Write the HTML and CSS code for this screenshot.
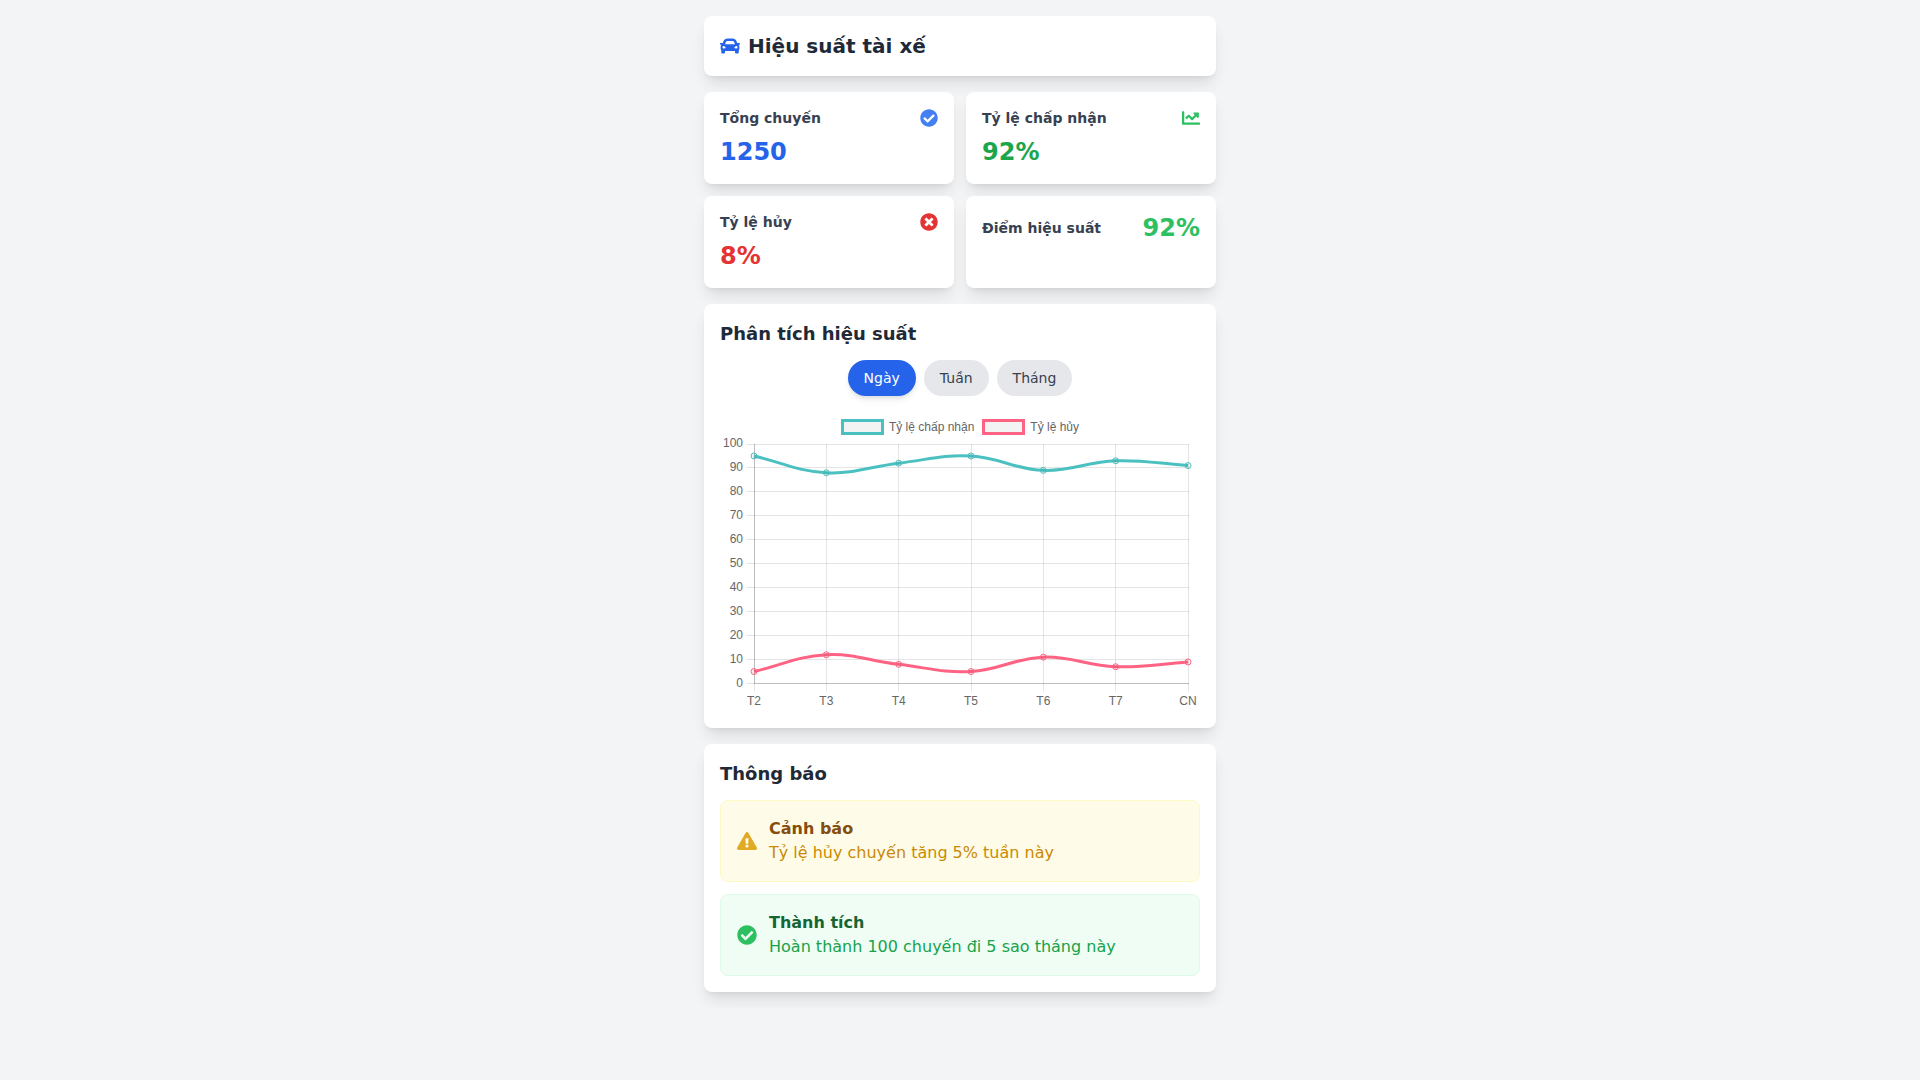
FILE: index.html
```html
<!DOCTYPE html>
<html lang="vi">
  <head>
    <meta charset="UTF-8">
    <meta name="viewport" content="width=device-width, initial-scale=1.0">
    <title>Hiệu suất tài xế</title>
    <link rel="stylesheet" href="styles.css">
  </head>
  <body>
    <div class="container">
      <header class="card header">
        <svg class="icon icon-car" viewBox="0 0 512 512" aria-hidden="true"><path d="M499.990 176h-59.870l-16.640-41.600C406.380 91.630 365.570 64 319.500 64h-127c-46.060 0-86.880 27.630-103.990 70.400L71.870 176H12.010C4.200 176-1.530 183.340.37 190.910l6 24C7.700 220.250 12.500 224 18.010 224h20.070C24.650 235.730 16 252.780 16 272v48c0 16.120 6.160 30.670 16 41.930V416c0 17.670 14.330 32 32 32h32c17.670 0 32-14.330 32-32v-32h256v32c0 17.670 14.330 32 32 32h32c17.670 0 32-14.330 32-32v-54.070c9.840-11.250 16-25.800 16-41.930v-48c0-19.220-8.650-36.270-22.070-48H494c5.510 0 10.310-3.750 11.640-9.090l6-24c1.890-7.570-3.840-14.910-11.650-14.910zm-352.060-17.830c7.290-18.220 24.940-30.170 44.570-30.170h127c19.630 0 37.280 11.950 44.570 30.170L384 208H128l19.930-49.830zM96 319.800c-19.200 0-32-12.760-32-31.900S76.800 256 96 256s48 28.710 48 47.850-28.800 15.950-48 15.950zm320 0c-19.200 0-48 3.190-48-15.950S396.800 256 416 256s32 12.760 32 31.900-12.800 31.900-32 31.900z"/></svg>
        <h1>Hiệu suất tài xế</h1>
      </header>

      <section class="stats">
        <div class="card">
          <div class="stat-head">
            <h2>Tổng chuyến</h2>
            <svg class="icon icon-blue" viewBox="0 0 512 512" aria-hidden="true"><path d="M504 256c0 136.967-111.033 248-248 248S8 392.967 8 256 119.033 8 256 8s248 111.033 248 248zM227.314 387.314l184-184c6.248-6.248 6.248-16.379 0-22.627l-22.627-22.627c-6.248-6.249-16.379-6.249-22.628 0L216 308.118l-70.059-70.059c-6.248-6.248-16.379-6.248-22.628 0l-22.627 22.627c-6.248 6.248-6.248 16.379 0 22.627l104 104c6.249 6.249 16.379 6.249 22.628.001z"/></svg>
          </div>
          <p class="value value-blue">1250</p>
        </div>
        <div class="card">
          <div class="stat-head">
            <h2>Tỷ lệ chấp nhận</h2>
            <svg class="icon icon-green" viewBox="0 0 512 512" aria-hidden="true"><path d="M496 384H64V80c0-8.840-7.160-16-16-16H16C7.160 64 0 71.160 0 80v336c0 17.670 14.330 32 32 32h464c8.840 0 16-7.160 16-16v-32c0-8.840-7.160-16-16-16zM464 96H345.940c-21.380 0-32.090 25.850-16.970 40.970l32.400 32.400L288 242.750l-73.370-73.370c-12.500-12.500-32.760-12.500-45.250 0l-68.690 68.690c-6.250 6.250-6.250 16.380 0 22.630l22.620 22.620c6.250 6.250 16.380 6.250 22.630 0L192 237.250l73.370 73.370c12.500 12.500 32.760 12.500 45.250 0l96-96 32.400 32.400c15.120 15.120 40.970 4.410 40.970-16.970V112c.010-8.840-7.150-16-15.990-16z"/></svg>
          </div>
          <p class="value value-green">92%</p>
        </div>
        <div class="card">
          <div class="stat-head">
            <h2>Tỷ lệ hủy</h2>
            <svg class="icon icon-red" viewBox="0 0 512 512" aria-hidden="true"><path d="M256 8C119 8 8 119 8 256s111 248 248 248 248-111 248-248S393 8 256 8zm121.600 313.100c4.700 4.700 4.700 12.300 0 17L338 377.600c-4.700 4.700-12.300 4.700-17 0L256 312l-65.100 65.600c-4.700 4.700-12.300 4.700-17 0L134.400 338c-4.700-4.700-4.700-12.300 0-17l65.600-65-65.600-65.100c-4.700-4.700-4.700-12.300 0-17l39.600-39.600c4.700-4.700 12.300-4.700 17 0l65 65.700 65.100-65.600c4.700-4.700 12.300-4.700 17 0l39.600 39.600c4.700 4.700 4.700 12.300 0 17L312 256l65.600 65.100z"/></svg>
          </div>
          <p class="value value-red">8%</p>
        </div>
        <div class="card">
          <div class="stat-head">
            <h2>Điểm hiệu suất</h2>
            <span class="value value-score">92%</span>
          </div>
        </div>
      </section>

      <section class="card">
        <h2 class="title">Phân tích hiệu suất</h2>
        <div class="tabs">
          <button type="button" class="tab active">Ngày</button>
          <button type="button" class="tab">Tuần</button>
          <button type="button" class="tab">Tháng</button>
        </div>
        <ul class="legend">
          <li class="legend-item"><span class="legend-box legend-accept"></span>Tỷ lệ chấp nhận</li>
          <li class="legend-item"><span class="legend-box legend-cancel"></span>Tỷ lệ hủy</li>
        </ul>
        <svg class="chart" id="chart" viewBox="0 0 480 276" role="img" aria-label="Phân tích hiệu suất"></svg>
      </section>

      <section class="card">
        <h2 class="title">Thông báo</h2>
        <div class="alerts">
          <div class="alert alert-warning">
            <svg class="icon icon-alert" viewBox="0 0 576 512" aria-hidden="true"><path d="M569.517 440.013C587.975 472.007 564.806 512 527.940 512H48.054c-36.937 0-59.999-40.055-41.577-71.987L246.423 23.985c18.467-32.009 64.720-31.951 83.154 0l239.940 416.028zM288 354c-25.405 0-46 20.595-46 46s20.595 46 46 46 46-20.595 46-46-20.595-46-46-46zm-43.673-165.346l7.418 136c.347 6.364 5.609 11.346 11.982 11.346h48.546c6.373 0 11.635-4.982 11.982-11.346l7.418-136c.375-6.874-5.098-12.654-11.982-12.654h-63.383c-6.884 0-12.356 5.780-11.981 12.654z"/></svg>
            <div>
              <h3>Cảnh báo</h3>
              <p>Tỷ lệ hủy chuyến tăng 5% tuần này</p>
            </div>
          </div>
          <div class="alert alert-success">
            <svg class="icon icon-alert" viewBox="0 0 512 512" aria-hidden="true"><path d="M504 256c0 136.967-111.033 248-248 248S8 392.967 8 256 119.033 8 256 8s248 111.033 248 248zM227.314 387.314l184-184c6.248-6.248 6.248-16.379 0-22.627l-22.627-22.627c-6.248-6.249-16.379-6.249-22.628 0L216 308.118l-70.059-70.059c-6.248-6.248-16.379-6.248-22.628 0l-22.627 22.627c-6.248 6.248-6.248 16.379 0 22.627l104 104c6.249 6.249 16.379 6.249 22.628.001z"/></svg>
            <div>
              <h3>Thành tích</h3>
              <p>Hoàn thành 100 chuyến đi 5 sao tháng này</p>
            </div>
          </div>
        </div>
      </section>
    </div>
    <script src="chart.js"></script>
  </body>
</html>
```

FILE: styles.css
```css
* {
  box-sizing: border-box;
  margin: 0;
  padding: 0;
}

body {
  background: #f3f4f6;
  color: #1f2937;
  font-family: "DejaVu Sans", sans-serif;
  font-size: 16px;
  line-height: 24px;
}

.container {
  display: flex;
  flex-direction: column;
  gap: 16px;
  max-width: 544px;
  margin: 0 auto;
  padding: 16px;
}

.card {
  background: #fff;
  border-radius: 8px;
  padding: 16px;
  box-shadow: 0 10px 15px -3px rgba(0, 0, 0, 0.1), 0 4px 6px -4px rgba(0, 0, 0, 0.1);
}

.header {
  display: flex;
  align-items: center;
  gap: 8px;
}

h1 {
  font-size: 20px;
  line-height: 28px;
}

.icon {
  flex-shrink: 0;
  width: 18px;
  height: 18px;
  fill: currentColor;
}

.icon-car {
  width: 20px;
  height: 20px;
  color: #2563eb;
}

.icon-blue {
  color: #4480f2;
}

.icon-green {
  color: #2dc060;
}

.icon-red {
  color: #e53333;
}

/* stats */
.stats {
  display: grid;
  grid-template-columns: 1fr 1fr;
  gap: 12px;
}

.stat-head {
  display: flex;
  align-items: center;
  justify-content: space-between;
}

.stat-head h2 {
  color: #374151;
  font-size: 14px;
  line-height: 20px;
}

.value {
  font-size: 24px;
  font-weight: bold;
  line-height: 32px;
}

p.value {
  margin-top: 8px;
}

.value-blue {
  color: #2563eb;
}

.value-green {
  color: #1ca64c;
}

.value-red {
  color: #e53333;
}

.value-score {
  color: #2dc060;
}

.title {
  font-size: 18px;
  line-height: 28px;
  margin-bottom: 12px;
}

/* chart */
.tabs {
  display: flex;
  justify-content: center;
  gap: 8px;
  margin-bottom: 16px;
}

.tab {
  background: #e5e7eb;
  border: 0;
  border-radius: 18px;
  color: #374151;
  cursor: pointer;
  font-family: inherit;
  font-size: 14px;
  line-height: 20px;
  padding: 8px 16px;
}

.tab.active {
  background: #2563eb;
  color: #fff;
  box-shadow: 0 4px 6px -1px rgba(0, 0, 0, 0.1), 0 2px 4px -2px rgba(0, 0, 0, 0.1);
}

.legend {
  display: flex;
  justify-content: center;
  gap: 8px;
  list-style: none;
  padding: 7px 0 1px;
  color: #666;
  font-family: "Liberation Sans", Arial, sans-serif;
  font-size: 12px;
  font-kerning: none;
  line-height: 16px;
}

.legend-item {
  display: flex;
  align-items: center;
  gap: 5px;
}

.legend-box {
  width: 43px;
  height: 16px;
  background: #f2f4f3;
  border: 3px solid;
}

.legend-accept {
  border-color: rgb(75, 192, 192);
}

.legend-cancel {
  border-color: rgb(255, 99, 132);
}

.chart {
  display: block;
  width: 100%;
  font-family: "Liberation Sans", Arial, sans-serif;
  font-size: 12px;
}

.chart text {
  fill: #666;
}

.grid-line {
  stroke: rgba(0, 0, 0, 0.1);
}

.axis-line {
  stroke: rgba(0, 0, 0, 0.25);
}

.series {
  fill: none;
  stroke-width: 3;
}

.point {
  fill: rgba(0, 0, 0, 0.05);
}

/* alerts */
.alerts {
  display: flex;
  flex-direction: column;
  gap: 12px;
}

.alert {
  display: flex;
  align-items: center;
  gap: 12px;
  border: 1px solid;
  border-radius: 8px;
  padding: 16px;
}

.icon-alert {
  width: 20px;
  height: 20px;
}

.alert-warning {
  background: #fefce8;
  border-color: #fef9c3;
  color: #ca8a04;
}

.alert-warning .icon {
  color: #e0aa24;
}

.alert-warning h3 {
  color: #854d0e;
}

.alert-success {
  background: #f0fdf4;
  border-color: #dcfce7;
  color: #16a34a;
}

.alert-success .icon {
  color: #2dc060;
}

.alert-success h3 {
  color: #166534;
}

h3 {
  font-size: 16px;
}
```

FILE: chart.js
```js
var labels = ['T2', 'T3', 'T4', 'T5', 'T6', 'T7', 'CN'];
var acceptRate = { color: 'rgb(75, 192, 192)', data: [95, 88, 92, 95, 89, 93, 91] };
var cancelRate = { color: 'rgb(255, 99, 132)', data: [5, 12, 8, 5, 11, 7, 9] };

var area = { left: 34, right: 468, top: 8, bottom: 247.5 };
var svg = document.getElementById('chart');

function add(name, attrs, text) {
  var el = document.createElementNS('http://www.w3.org/2000/svg', name);
  for (var key in attrs) {
    el.setAttribute(key, attrs[key]);
  }
  if (text !== undefined) {
    el.textContent = text;
  }
  svg.appendChild(el);
}

function xAt(i) {
  return area.left + i * (area.right - area.left) / (labels.length - 1);
}

function yAt(value) {
  return area.bottom - value * (area.bottom - area.top) / 100;
}

function drawLine(x1, y1, x2, y2, cls) {
  add('line', { x1: x1, y1: y1, x2: x2, y2: y2, 'class': cls });
}

function drawGrid() {
  for (var v = 0; v <= 100; v += 10) {
    // half pixel keeps the 1px lines sharp
    var y = Math.floor(yAt(v)) + 0.5;
    drawLine(area.left - 8, y, area.left, y, 'grid-line');
    drawLine(area.left, y, area.right + 1, y, v === 0 ? 'axis-line' : 'grid-line');
    add('text', { x: area.left - 11, y: Math.round(yAt(v)) + 3, 'text-anchor': 'end' }, v);
  }
  labels.forEach(function (label, i) {
    var x = Math.floor(xAt(i)) + 0.5;
    drawLine(x, area.top, x, area.bottom, i === 0 ? 'axis-line' : 'grid-line');
    drawLine(x, area.bottom, x, area.bottom + 8, 'grid-line');
    add('text', { x: xAt(i), y: 269, 'text-anchor': 'middle' }, label);
  });
}

// smooth curve through the points, tension 0.4
function curve(points) {
  var tension = 0.4;
  var cps = points.map(function (p, i) {
    var prev = points[i - 1] || p;
    var next = points[i + 1] || p;
    var d1 = Math.hypot(p.x - prev.x, p.y - prev.y);
    var d2 = Math.hypot(next.x - p.x, next.y - p.y);
    var a = tension * d1 / (d1 + d2);
    var b = tension * d2 / (d1 + d2);
    return {
      inX: p.x - a * (next.x - prev.x),
      inY: p.y - a * (next.y - prev.y),
      outX: p.x + b * (next.x - prev.x),
      outY: p.y + b * (next.y - prev.y)
    };
  });
  var d = 'M' + points[0].x + ' ' + points[0].y;
  for (var i = 1; i < points.length; i++) {
    d += ' C' + [cps[i - 1].outX, cps[i - 1].outY, cps[i].inX, cps[i].inY, points[i].x, points[i].y].join(' ');
  }
  return d;
}

function drawSeries(set) {
  var points = set.data.map(function (v, i) {
    return { x: xAt(i), y: yAt(v) };
  });
  add('path', { d: curve(points), stroke: set.color, 'class': 'series' });
  points.forEach(function (p) {
    add('circle', { cx: p.x, cy: p.y, r: 3, stroke: set.color, 'class': 'point' });
  });
}

drawGrid();
drawSeries(cancelRate);
drawSeries(acceptRate);
```
